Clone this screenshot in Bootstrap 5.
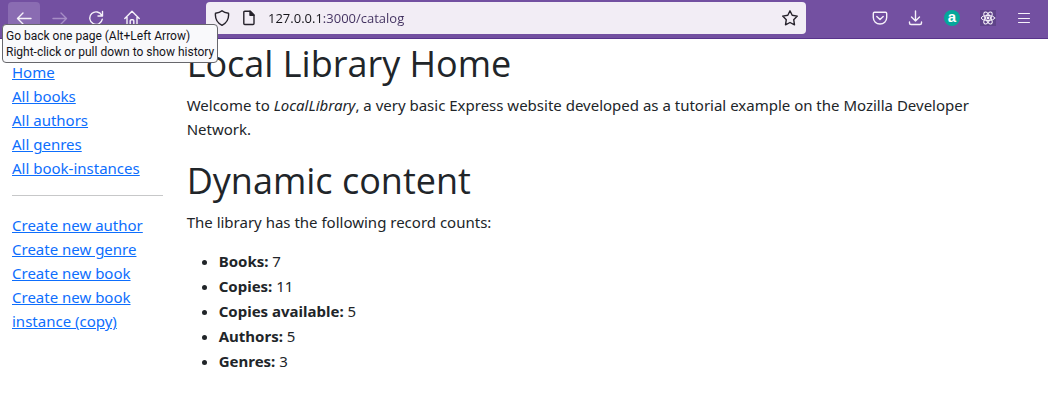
<!DOCTYPE html>
<html lang="en">
<head>
<meta charset="utf-8">
<meta name="viewport" content="width=device-width, initial-scale=1">
<title>Local Library Home</title>
<link href="https://cdn.jsdelivr.net/npm/bootstrap@5.3.0/dist/css/bootstrap.min.css" rel="stylesheet">
<style>
body { font-family: "Noto Sans", "Open Sans", sans-serif; font-size: 15px; line-height: 24px; color: #212529; background: #fff; }
a { color: #0d6efd; }
.browser-bar { background: #7350a1; border-bottom: 1px solid #58338b; height: 39px; padding: 2px 8px 0; }
.tool-btn { width: 32px; height: 32px; padding: 0; border: 0; border-radius: 4px; background: transparent; color: #f6f2fa; display: flex; align-items: center; justify-content: center; }
.tool-btn.pressed { background: #8a6cb2; }
.tool-btn:disabled { color: #a68dc5; }
.tool-btn svg, .address svg { display: block; flex: none; fill: none; stroke: currentColor; stroke-width: 1.4; stroke-linecap: round; stroke-linejoin: round; }
.ext-letter { width: 16px; height: 16px; border-radius: 50%; background: #05a79b; color: #fff; font: 700 15px/14px "Liberation Sans", sans-serif; }
.address { height: 32px; margin: 0 54px; padding: 0 8px; gap: 11px; border-radius: 4px; background: #f2edf5; color: #26222b; min-width: 0; }
.address input { min-width: 0; padding: 0; border: 0; outline: 0; font-family: "Open Sans", sans-serif; font-size: 13px; line-height: 22px; color: transparent; background: linear-gradient(to right, #15141a 56px, #41305f 56px); -webkit-background-clip: text; background-clip: text; }
.back-tip { position: absolute; left: 2px; top: 24px; z-index: 10; padding: 3px 3px 2px; border: 1px solid #67676c; border-radius: 4px; background: #f9f9fb; color: #15141a; font-family: Roboto, sans-serif; font-size: 12px; line-height: 16px; white-space: nowrap; }
.page { padding-top: 1px; }
.side-links { margin-top: 20px; }
.page h1 { font-family: "Open Sans", sans-serif; font-size: 36px; line-height: 48px; font-weight: 400; margin-bottom: 5px; }
.side-rule { margin: 15px 0 17px; }
.counts li { line-height: 25px; }
.counts { margin-top: -1px; }
</style>
</head>
<body>
<header class="browser-bar d-flex align-items-start gap-1">
  <button class="tool-btn pressed" type="button" aria-label="Back" aria-describedby="tip"><svg width="16" height="16" viewBox="0 0 16 16"><path d="M15 8.500H1.500M7 3L1.500 8.500L7 14"/></svg></button>
  <button class="tool-btn" type="button" aria-label="Forward" disabled><svg width="16" height="16" viewBox="0 0 16 16"><path d="M1 8.500H14.500M9 3L14.500 8.500L9 14"/></svg></button>
  <button class="tool-btn" type="button" aria-label="Reload"><svg width="16" height="16" viewBox="0 0 16 16"><path d="M13.800 5.500A6.300 6.300 0 1 0 14.300 9.200M14.500 1.500V6H10"/></svg></button>
  <button class="tool-btn" type="button" aria-label="Home"><svg width="16" height="16" viewBox="0 0 16 16"><path d="M.8 8.500L8 1.300L15.200 8.500M3 7V15H6.200V10.800Q6.200 9.800 7.200 9.800H8.800Q9.800 9.800 9.800 10.800V15H13V7"/></svg></button>
  <div class="address d-flex align-items-center flex-grow-1">
    <svg width="16" height="16" viewBox="0 0 16 16"><path d="M8 .8C6.300 2.300 3.800 3 1.500 3.200C.9 8.500 2.900 12.800 8 15.300C13.100 12.800 15.100 8.500 14.500 3.200C12.200 3 9.700 2.300 8 .8Z"/></svg>
    <svg width="16" height="16" viewBox="0 0 16 16"><path d="M2.800 2.300Q2.800 1.300 3.800 1.300H9.300L13 5V13.500Q13 14.500 12 14.500H3.800Q2.800 14.500 2.800 13.500Z"/><path d="M9 1.300V5.300H13Z" fill="currentColor"/></svg>
    <input class="flex-grow-1" type="text" aria-label="Address" value="127.0.0.1:3000/catalog">
    <svg width="16" height="16" viewBox="0 0 16 16"><path d="M8 .8L10.200 5.300L15.300 6.100L11.700 9.700L12.500 14.800L8 12.500L3.500 14.800L4.300 9.700L.7 6.100L5.800 5.300Z"/></svg>
  </div>
  <button class="tool-btn" type="button" aria-label="Save to Pocket"><svg width="16" height="16" viewBox="0 0 16 16"><path d="M2.500 2.200H13.500Q14.700 2.200 14.700 3.400V7.500C14.700 11.200 11.700 14 8 14S1.300 11.200 1.300 7.500V3.400Q1.300 2.200 2.500 2.200ZM4.800 6.500L8 9.600L11.200 6.500"/></svg></button>
  <button class="tool-btn" type="button" aria-label="Downloads"><svg width="16" height="16" viewBox="0 0 16 16"><path d="M7.500 1V11M3.500 7L7.500 11L11.500 7M1.500 12V13Q1.500 14.500 3 14.500H12Q13.500 14.500 13.500 13V12"/></svg></button>
  <button class="tool-btn" type="button"><span class="ext-letter">a</span></button>
  <button class="tool-btn" type="button" aria-label="React developer tools"><svg width="16" height="16" viewBox="0 0 16 16"><rect width="16" height="16" fill="#60448a" stroke="none"/><g stroke-width="1"><ellipse cx="8" cy="8" rx="6.700" ry="2.600"/><ellipse cx="8" cy="8" rx="6.700" ry="2.600" transform="rotate(60 8 8)"/><ellipse cx="8" cy="8" rx="6.700" ry="2.600" transform="rotate(120 8 8)"/></g><circle cx="8" cy="8" r="1.400" fill="currentColor" stroke="none"/></svg></button>
  <button class="tool-btn" type="button" aria-label="Menu"><svg width="16" height="16" viewBox="0 0 16 16"><path stroke-width="1" d="M2.500 3.500H13.500M2.500 8.500H13.500M2.500 12.500H13.500"/></svg></button>
</header>
<div id="tip" class="back-tip" role="tooltip">Go back one page (Alt+Left Arrow)<br>Right-click or pull down to show history</div>
<main class="page container-fluid">
  <div class="row">
    <nav class="col-sm-2" aria-label="Library">
      <ul class="side-links list-unstyled mb-0">
        <li><a href="#">Home</a></li>
        <li><a href="#">All books</a></li>
        <li><a href="#">All authors</a></li>
        <li><a href="#">All genres</a></li>
        <li><a href="#">All book-instances</a></li>
      </ul>
      <hr class="side-rule">
      <ul class="list-unstyled">
        <li><a href="#">Create new author</a></li>
        <li><a href="#">Create new genre</a></li>
        <li><a href="#">Create new book</a></li>
        <li><a href="#">Create new book instance (copy)</a></li>
      </ul>
    </nav>
    <div class="col-sm-10">
      <h1>Local Library Home</h1>
      <p class="pe-3">Welcome to <em>LocalLibrary</em>, a very basic Express website developed as a tutorial example on the Mozilla Developer Network.</p>
      <h1>Dynamic content</h1>
      <p>The library has the following record counts:</p>
      <ul class="counts">
        <li><strong>Books:</strong> 7</li>
        <li><strong>Copies:</strong> 11</li>
        <li><strong>Copies available:</strong> 5</li>
        <li><strong>Authors:</strong> 5</li>
        <li><strong>Genres:</strong> 3</li>
      </ul>
    </div>
  </div>
</main>
<script src="https://cdn.jsdelivr.net/npm/bootstrap@5.3.0/dist/js/bootstrap.bundle.min.js"></script>
</body>
</html>
